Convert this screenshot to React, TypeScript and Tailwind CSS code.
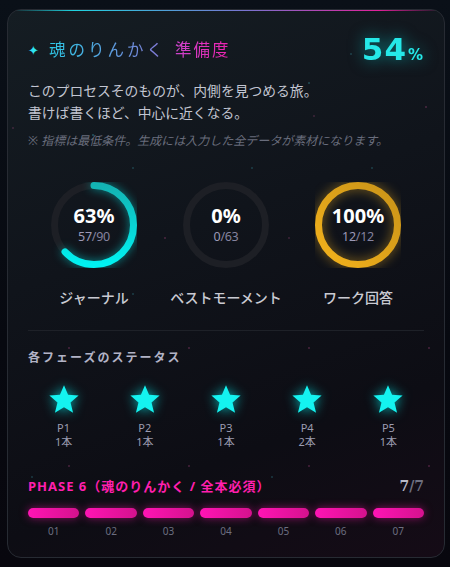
import { type ReactNode } from 'react'

const rings = [
  { label: 'ジャーナル', pct: 63, done: 57, total: 90, kind: 'cyan' },
  { label: 'ベストモーメント', pct: 0, done: 0, total: 63, kind: 'none' },
  { label: 'ワーク回答', pct: 100, done: 12, total: 12, kind: 'gold' },
] as const

const phases = [
  { name: 'P1', count: 1 },
  { name: 'P2', count: 1 },
  { name: 'P3', count: 1 },
  { name: 'P4', count: 2 },
  { name: 'P5', count: 1 },
]

// faint "stardust" specks scattered over the card background
const specks = [
  { x: 84, y: 124, c: 'bg-cyan-300/30' },
  { x: 342, y: 43, c: 'bg-cyan-300/20' },
  { x: 300, y: 72, c: 'bg-cyan-300/25' },
  { x: 417, y: 96, c: 'bg-pink-400/25' },
  { x: 305, y: 105, c: 'bg-pink-400/20' },
  { x: 124, y: 157, c: 'bg-cyan-300/20' },
  { x: 243, y: 157, c: 'bg-cyan-300/20' },
  { x: 363, y: 157, c: 'bg-cyan-300/20' },
  { x: 80, y: 198, c: 'bg-cyan-300/25' },
  { x: 156, y: 227, c: 'bg-pink-400/25' },
  { x: 280, y: 227, c: 'bg-pink-400/20' },
  { x: 4, y: 117, c: 'bg-pink-400/20' },
  { x: 124, y: 283, c: 'bg-cyan-300/20' },
  { x: 363, y: 283, c: 'bg-cyan-300/20' },
  { x: 60, y: 337, c: 'bg-pink-400/25' },
  { x: 180, y: 337, c: 'bg-pink-400/25' },
  { x: 300, y: 337, c: 'bg-pink-400/25' },
  { x: 420, y: 337, c: 'bg-pink-400/25' },
  { x: 23, y: 466, c: 'bg-cyan-300/20' },
  { x: 263, y: 466, c: 'bg-cyan-300/20' },
  { x: 60, y: 455, c: 'bg-pink-400/25' },
  { x: 180, y: 455, c: 'bg-pink-400/25' },
  { x: 300, y: 455, c: 'bg-pink-400/25' },
  { x: 420, y: 455, c: 'bg-pink-400/25' },
]

function Ring({ pct, kind }: { pct: number; kind: 'cyan' | 'gold' | 'none' }): ReactNode {
  const size = 86
  const stroke = 7
  const r = (size - stroke) / 2
  const circ = 2 * Math.PI * r
  const glow =
    kind === 'cyan'
      ? 'drop-shadow-[0_0_5px_rgba(0,235,235,0.55)]'
      : kind === 'gold'
        ? 'drop-shadow-[0_0_6px_rgba(240,176,32,0.55)]'
        : ''
  return (
    <svg width={size} height={size} viewBox={`0 0 ${size} ${size}`} className="absolute inset-0">
      <defs>
        <linearGradient id="ring-cyan" x1="1" y1="0" x2="0" y2="0">
          <stop offset="0" stopColor="#13b3b3" />
          <stop offset="1" stopColor="#00f2f2" />
        </linearGradient>
        <linearGradient id="ring-gold" x1="0" y1="0" x2="1" y2="1">
          <stop offset="0" stopColor="#f3b21c" />
          <stop offset="1" stopColor="#c99318" />
        </linearGradient>
      </defs>
      <circle cx={size / 2} cy={size / 2} r={r} fill="none" stroke="#1d1f25" strokeWidth={stroke} />
      {pct > 0 && (
        <g className={glow}>
          <circle
            cx={size / 2}
            cy={size / 2}
            r={r}
            fill="none"
            stroke={kind === 'gold' ? 'url(#ring-gold)' : 'url(#ring-cyan)'}
            strokeWidth={stroke}
            strokeLinecap="round"
            strokeDasharray={`${(pct / 100) * circ} ${circ}`}
            transform={`rotate(-90 ${size / 2} ${size / 2})`}
          />
        </g>
      )}
    </svg>
  )
}

function Star(): ReactNode {
  return (
    <svg
      width="32"
      height="32"
      viewBox="0 0 24 24"
      className="drop-shadow-[0_0_6px_rgba(0,245,245,0.7)]"
    >
      <path
        d="M12 1.6l3.05 7.3 7.9.55-6.05 5.1 1.9 7.75L12 18.1l-6.8 4.2 1.9-7.75-6.05-5.1 7.9-.55z"
        fill="#14f3f0"
      />
    </svg>
  )
}

export default function App(): ReactNode {
  return (
    <div
      className="min-h-[567px] w-[450px] bg-[linear-gradient(180deg,#0a1018_0%,#070910_60%,#08070e_100%)] pt-[9px] pb-[9px] pl-[7px] pr-[5px]"
      style={{ fontFamily: '"Noto Sans", "Noto Sans CJK JP", sans-serif' }}
    >
      <div className="relative h-[549px] overflow-hidden rounded-[14px] border border-[#272b33] bg-[linear-gradient(160deg,#151d23_0%,#10141b_40%,#0d0d14_75%,#150b16_100%)] px-5 pt-6">
        <div className="absolute inset-x-0 top-0 h-px bg-[linear-gradient(90deg,transparent_0%,#1fd3e0_15%,#7a72d0_55%,#e0209a_85%,transparent_100%)]" />
        {specks.map((s, i) => (
          <span
            key={i}
            className={`absolute h-[2px] w-[2px] rounded-full ${s.c}`}
            style={{ left: s.x, top: s.y }}
          />
        ))}

        {/* header */}
        <div className="relative flex h-8 items-center justify-between">
          <div className="flex items-center">
            <span
              className="mr-[10px] text-[13px] leading-none text-[#2ee4f2]"
              style={{ fontFamily: '"DejaVu Sans", sans-serif' }}
            >
              ✦
            </span>
            <span className="bg-[linear-gradient(90deg,#2cc8e6,#8676d6)] bg-clip-text text-[16.5px] tracking-[3px] text-transparent">
              魂のりんかく
            </span>
            <span className="ml-[9px] bg-[linear-gradient(90deg,#cc44cc,#ee22b0)] bg-clip-text text-[16.5px] tracking-[2px] text-transparent">
              準備度
            </span>
          </div>
          <div
            className="-mt-[2px] flex items-baseline pr-[1px] text-[#25e8e8] drop-shadow-[0_0_8px_rgba(0,230,230,0.55)]"
            style={{ fontFamily: '"DejaVu Sans", sans-serif' }}
          >
            <span className="text-[31px] font-bold leading-none tracking-[1px]">54</span>
            <span className="ml-[1px] text-[15px] font-bold leading-none">%</span>
          </div>
        </div>

        {/* copy */}
        <p className="mt-[14px] text-[13.8px] leading-[22px] text-[#c3c6d2]">
          このプロセスそのものが、内側を見つめる旅。
          <br />
          書けば書くほど、中心に近くなる。
        </p>
        <p className="mt-[9px] text-[12px] italic leading-4 text-[#696d7c]">
          ※ 指標は最低条件。生成には入力した全データが素材になります。
        </p>

        {/* rings */}
        <div className="mt-[33px] grid grid-cols-3">
          {rings.map((r) => (
            <div key={r.label} className="flex flex-col items-center">
              <div className="relative h-[86px] w-[86px]">
                <Ring pct={r.pct} kind={r.kind} />
                <div className="absolute inset-0 flex flex-col items-center justify-center pb-[2px]">
                  <span className="text-[20px] font-bold leading-[24px] text-white">{r.pct}%</span>
                  <span className="mt-[1px] text-[12.5px] leading-4 tracking-[-0.3px] text-[#85839f]">
                    <span className="text-[#9b99b6]">{r.done}</span>/{r.total}
                  </span>
                </div>
              </div>
              <span className="mt-5 text-[14px] font-medium leading-5 text-[#c9cad2]">
                {r.label}
              </span>
            </div>
          ))}
        </div>

        <div className="mt-[22px] h-px bg-[#1e2128]" />

        {/* phase status */}
        <h3 className="mt-[19px] text-[12px] font-bold leading-4 tracking-[2px] text-[#b2b3c6]">
          各フェーズのステータス
        </h3>
        <div className="-mx-[5px] mt-[17px] grid grid-cols-5">
          {phases.map((p) => (
            <div key={p.name} className="flex flex-col items-center">
              <Star />
              <span className="mt-[6px] text-[11px] leading-[14px] text-[#9b9cb0]">{p.name}</span>
              <span className="text-[11px] leading-[14px] text-[#9b9cb0]">{p.count}本</span>
            </div>
          ))}
        </div>

        {/* phase 6 */}
        <div className="mt-[28px] flex items-center justify-between">
          <span className="text-[13px] font-bold leading-[18px] tracking-[1px] text-[#ff1fae]">
            PHASE 6（魂のりんかく / 全本必須）
          </span>
          <span
            className="text-[14px] font-bold leading-[18px] text-[#6e7080]"
            style={{ fontFamily: '"DejaVu Serif", serif' }}
          >
            <span className="text-[#b8bac8]">7</span>/7
          </span>
        </div>
        <div className="mt-[13px] flex gap-[6px]">
          {['01', '02', '03', '04', '05', '06', '07'].map((n) => (
            <div key={n} className="flex flex-1 flex-col items-center">
              <div className="h-[10px] w-full rounded-full bg-[linear-gradient(90deg,#ff14b4,#d5128e)] shadow-[0_0_8px_rgba(255,20,170,0.5)]" />
              <span className="mt-[7px] text-[10px] leading-3 text-[#6c6e80]">{n}</span>
            </div>
          ))}
        </div>
      </div>
    </div>
  )
}
